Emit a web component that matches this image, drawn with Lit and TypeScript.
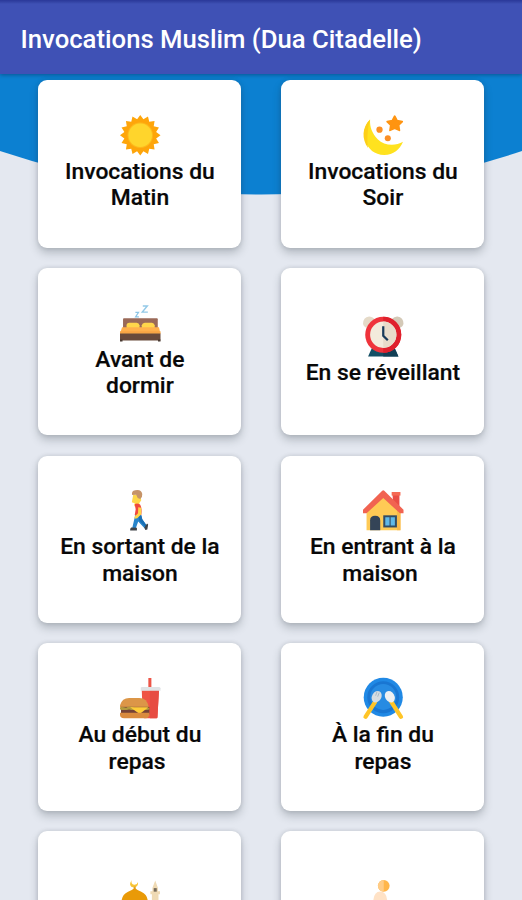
import { LitElement, html, svg, css, type TemplateResult, type SVGTemplateResult } from "lit";
import { customElement, property } from "lit/decorators.js";

const sunRays = Array.from({ length: 32 }, (_, i) => {
  const radius = i % 2 === 0 ? 20 : 16;
  const angle = (i * Math.PI) / 16 - Math.PI / 2;
  return `${(20 + radius * Math.cos(angle)).toFixed(2)},${(20 + radius * Math.sin(angle)).toFixed(2)}`;
}).join(" ");

const icons: Record<string, SVGTemplateResult> = {
  sun: svg`
    <polygon points=${sunRays} fill="#fea50a"/>
    <circle cx="20" cy="20" r="12.6" fill="#fdb91c"/>
    <circle cx="20" cy="20" r="11.6" fill="#ffd52c"/>`,
  moon: svg`
    <path d="M7 4.500C-4 15 1.500 39.500 21 39.500C30 39.500 36.500 34 39.500 26.500C32 31 21 30.500 14.500 24C9 18 6.500 12 7 4.500Z" fill="#ffe21f"/>
    <path d="M7 4.500C-1 12-1.500 24 5 32.500C4 27 4 14 7 4.500Z" fill="#fdcf18"/>
    <path d="M31.300 1.200L33.600 5.700L38.700 6.500L35.100 10.100L35.900 15.100L31.300 12.900L26.700 15.100L27.500 10.100L23.900 6.500L29 5.700Z" fill="#ff9410" stroke="#ff9410" stroke-width="1.800" stroke-linejoin="round"/>
    <circle cx="16.300" cy="14.500" r="3.100" fill="#fb8f24"/>
    <circle cx="24.500" cy="23" r="3" fill="#fb8f24"/>`,
  bed: svg`
    <path d="M15.200 9.200H18.300L15.400 13.700H18.700" fill="none" stroke="#8dc5e6" stroke-width="1.200"/>
    <path d="M22.500 3H27L22 9H27.500" fill="none" stroke="#93c9e8" stroke-width="1.400"/>
    <path d="M3 15.500Q3 15 4 15H36.500Q37.300 15 37.300 16V27H3Z" fill="#9a6958"/>
    <path d="M6.500 25V21.500Q7 19.500 9 19.500H16.500Q18.800 19.500 19.300 22V25Z" fill="#ffd64b"/>
    <path d="M21.500 25V22Q22 19.500 24.500 19.500H31.500Q33.600 19.500 34.300 22V25Z" fill="#ffd64b"/>
    <path d="M2 24H38.500L40 30.500H0Z" fill="#ffb04c"/>
    <path d="M0 28H40V30H0Z" fill="#f8a544"/>
    <path d="M0 30H40V37H0Z" fill="#694a3b"/>
    <path d="M0 36H2.500V38H0ZM37.500 36H40V38H37.500Z" fill="#493a32"/>`,
  alarm: svg`
    <path d="M9 31H31L35 40H5Z" fill="#134f65"/>
    <path d="M20 31H31L35 40H20Z" fill="#123f55"/>
    <path d="M0 8Q0 1 6 .5Q9 .3 11.500 3L3 11.500Q.5 10.500 0 8Z" fill="#e5dac8"/>
    <path d="M40 8Q40 1 34 .5Q31 .3 28.500 3L37 11.500Q39.500 10.500 40 8Z" fill="#d4c9b7"/>
    <circle cx="20" cy="18.500" r="17.800" fill="#ef333b"/>
    <path d="M20 .7A17.800 17.800 0 0 1 20 36.300Z" fill="#df202c"/>
    <circle cx="20" cy="18.500" r="13" fill="#f3ebdc"/>
    <path d="M20 5.500A13 13 0 0 1 20 31.500Z" fill="#e8dcca"/>
    <path d="M20 10V19.500L24.500 24" fill="none" stroke="#183b5a" stroke-width="2.200"/>`,
  walk: svg`
    <g transform="translate(-1 0)">
      <path d="M14 5H21L22 10L20 13L21 16H15L15.500 13L12.700 12Z" fill="#ffd84a"/>
      <path d="M13 5Q12 1 16 .3Q22-1 23 4Q23.300 7 21 9L18.500 8L17 4.800Z" fill="#c69469"/>
      <path d="M15.500 14Q18 12.500 21 14.500Q23 18 22 25H15.500L16.500 19Z" fill="#f0493e"/>
      <path d="M16 25H22L23 29L28 36L25.500 38L19 31L16.500 38H13Z" fill="#2885cb"/>
      <path d="M19 25H22L23 29L28 36L26.500 37L20 30Z" fill="#1970b5"/>
      <path d="M19 17L22 17.500V24L18 28L15.500 28.500L15.300 26.500L18.800 23Z" fill="#ffd448"/>
      <path d="M12 37L17.700 37.200V40H11Q10.800 38 12 37ZM25 37L27.700 33L28.800 34L28 39L26 39.500Z" fill="#414549"/>
    </g>`,
  house: svg`
    <path d="M29 2.500H36V17H30Z" fill="#e94d45"/>
    <path d="M28.300 2H37V5.500H28.300Z" fill="#f56954"/>
    <path d="M3.500 20L20 5L37 20V39.700H3.500Z" fill="#ffca55"/>
    <path d="M33.500 18H37V39.700H33.500Z" fill="#f9b94a"/>
    <path d="M19 .7Q20 0 21 .7L40 19.500V23H36.500L20 8L3.500 23H0V19.500Z" fill="#f16351"/>
    <path d="M7 39.700V30Q7 25.500 12 25.500Q17 25.500 17 30V39.700Z" fill="#344457"/>
    <path d="M20 25H33.500V37H20Z" fill="#334c64"/>
    <path d="M22 27H26.200V35H22ZM27.300 27H31.500V35H27.300Z" fill="#60b8e8"/>`,
  meal: svg`
    <path d="M28 0H31V12H28Z" fill="#ed5548"/>
    <path d="M21.500 12H38.500L37 38.500Q37 39.700 36 39.700H24Q22.700 39.700 22.500 38Z" fill="#ef5545"/>
    <path d="M29.500 12H38.500L37 38.500Q37 39.700 36 39.700H29.500Z" fill="#e74c42"/>
    <path d="M20.500 9.700Q20.500 8.800 22 8.800H38Q40 8.800 40 10V12.700H20.500Z" fill="#dfe3e5"/>
    <path d="M0 29V27Q2 19.700 9 19.700H19Q27 19.700 28.500 29Z" fill="#dc9648"/>
    <path d="M1 28.500H29V36H1Z" fill="#754236"/>
    <path d="M0 28.800Q3 28 6 29.500Q10 27 14 29.500H29V31Q24 32 20 31Q13 32 9 31Q4 32 0 31Z" fill="#b39a3d"/>
    <path d="M10 29H28L19.500 35.500Z" fill="#ffcc38"/>
    <path d="M0 34.300H29V37Q28 39.700 25 39.700H4Q0 39.700 0 36Z" fill="#d98b3e"/>`,
  plate: svg`
    <circle cx="20" cy="19" r="19.300" fill="#2089e5"/>
    <circle cx="20" cy="19" r="15.800" fill="#1976d2"/>
    <circle cx="20" cy="18.700" r="12.800" fill="#278be2"/>
    <path d="M12 23.500L2.500 38.300" stroke="#ffc527" stroke-width="4.200" stroke-linecap="round"/>
    <path d="M28 23.500L37.500 38.300" stroke="#ffc527" stroke-width="4.200" stroke-linecap="round"/>
    <ellipse cx="13.500" cy="18.500" rx="4.600" ry="6" transform="rotate(30 13.500 18.500)" fill="#d5dce1"/>
    <ellipse cx="26.500" cy="18.500" rx="4.600" ry="6" transform="rotate(-30 26.500 18.500)" fill="#eef0f2"/>
    <path d="M13.800 13.500L12.500 17.500M16 14.500L14.500 18.500" stroke="#9db2c0" stroke-width=".8"/>`,
  mosque: svg`
    <path d="M11.500 1Q10.500 5 14 5.700Q17 6 17.800 3Q18.500 8 13.500 8.300Q7.500 7.500 11.500 1Z" fill="#f8c435"/>
    <path d="M13.500 7.500H15.500V11H13.500Z" fill="#dca12e"/>
    <path d="M1.500 22Q2 15 8 12.500Q12 11 14.500 9Q17 11 21 12.500Q27 15 27.500 22V40H1.500Z" fill="#e99a08"/>
    <path d="M32 9L34.800 1.500L37.500 9V12H39.500V15H38V40H31.500V15H30V12H32Z" fill="#efdab4"/>
    <path d="M33.300 9H36.300V12.500H33.300Z" fill="#756a59"/>`,
  person: svg`
    <circle cx="20.500" cy="6.700" r="5.800" fill="#ffb64b"/>
    <path d="M20.500.9A5.800 5.800 0 0 0 20.500 12.500Z" fill="#ffcc87"/>
    <path d="M10 24Q10 12.500 17 12.300Q23.500 12.500 24 22V40H10Z" fill="#ffe2c6"/>`,
};

interface Category {
  icon: string;
  lines: string[];
}

// A trailing no-break space stays part of its line when the label is centred.
const categories: Category[] = [
  { icon: "sun", lines: ["Invocations du", "Matin"] },
  { icon: "moon", lines: ["Invocations du", "Soir"] },
  { icon: "bed", lines: ["Avant de", "dormir"] },
  { icon: "alarm", lines: ["En se réveillant"] },
  { icon: "walk", lines: ["En sortant de la", "maison"] },
  { icon: "house", lines: ["En entrant à la", "maison\u00a0"] },
  { icon: "meal", lines: ["Au début du", "repas\u00a0"] },
  { icon: "plate", lines: ["À la fin du", "repas"] },
  { icon: "mosque", lines: ["\u00a0"] },
  { icon: "person", lines: ["\u00a0"] },
];

@customElement("category-card")
export class CategoryCard extends LitElement {
  @property() icon = "";
  @property({ attribute: false }) lines: string[] = [];

  static styles = css`
    :host {
      display: flex;
      flex-direction: column;
      align-items: center;
      justify-content: center;
      background: #fff;
      border-radius: 9px;
      box-shadow: 0 5px 9px rgba(40, 50, 60, 0.25), 0 0 4px rgba(40, 50, 60, 0.14);
    }
    .icon {
      display: block;
      width: 40.5px;
      height: 40.5px;
      overflow: visible;
    }
    .label {
      padding: 3.7px 0 0.8px;
      text-align: center;
      font-size: 22.85px;
      font-weight: 500;
      line-height: 26.5px;
      color: #080808;
      -webkit-text-stroke: 0.2px #080808;
    }
    .line {
      display: block;
      white-space: nowrap;
    }
  `;

  render(): TemplateResult {
    return html`
      <svg class="icon" viewBox="0 0 40 40" aria-hidden="true">${icons[this.icon]}</svg>
      <div class="label">${this.lines.map((line) => html`<span class="line">${line}</span>`)}</div>
    `;
  }
}

@customElement("app-root")
export class AppRoot extends LitElement {
  static styles = css`
    :host {
      display: flex;
      flex-direction: column;
      position: relative;
      height: 900px;
      overflow: hidden;
      background: #e4e8f0;
      font-family: Roboto, "Liberation Sans", sans-serif;
    }
    .bar {
      position: relative;
      z-index: 1;
      flex: none;
      box-sizing: border-box;
      height: 74px;
      padding: 4px 20.5px 0;
      display: flex;
      align-items: center;
      background: linear-gradient(#2a3899 0, #3444a5 2px, #3f51b5 4px);
      box-shadow: 0 1px 4px rgba(0, 20, 50, 0.4);
    }
    .title {
      margin: 0;
      font-size: 25.7px;
      font-weight: 500;
      line-height: 30px;
      white-space: nowrap;
      color: #fff;
    }
    .backdrop {
      position: absolute;
      top: 0;
      left: 0;
      width: 522px;
      height: 200px;
    }
    .grid {
      position: relative;
      display: grid;
      grid-template-columns: 203px 203px;
      grid-auto-rows: 167.5px;
      gap: 20.25px 40px;
      padding: 6px 0 0 38.4px;
    }
  `;

  render(): TemplateResult {
    return html`
      <svg class="backdrop" viewBox="0 0 522 200" aria-hidden="true">
        <path d="M0 0H522V151Q261 238 0 151Z" fill="#0c80d1" />
      </svg>
      <header class="bar"><h1 class="title">Invocations Muslim (Dua Citadelle)</h1></header>
      <main class="grid">
        ${categories.map((c) => html`<category-card .icon=${c.icon} .lines=${c.lines}></category-card>`)}
      </main>
    `;
  }
}
